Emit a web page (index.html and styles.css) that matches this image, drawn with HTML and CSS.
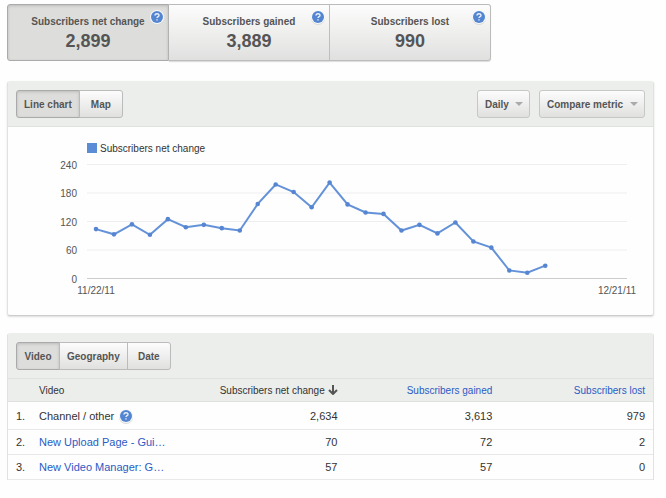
FILE: index.html
```
<!DOCTYPE html>
<html lang="en">
<head>
	<meta charset="UTF-8">
	<title>Subscribers</title>
	<link rel="stylesheet" href="styles.css">
</head>
<body>
	<svg class="defs" aria-hidden="true">
		<symbol id="help" viewBox="0 0 16 16">
			<circle cx="8" cy="9" r="7" fill="#d9dbd9"/>
			<circle cx="8" cy="8" r="7" fill="#f8f9fa"/>
			<circle cx="8" cy="8" r="6" fill="#5485d0"/>
			<path d="M6 6.5C6 4.2 10 4.2 10 6.4C10 7.7 8 7.6 8 9.1M8 10.2V11.4" fill="none" stroke="#e8effa" stroke-width="1.4"/>
		</symbol>
	</svg>

	<div class="stats">
		<button type="button" class="stat selected">
			<span class="stat-name">Subscribers net change</span>
			<span class="stat-value">2,899</span>
			<svg class="help"><use href="#help"/></svg>
		</button>
		<button type="button" class="stat">
			<span class="stat-name">Subscribers gained</span>
			<span class="stat-value">3,889</span>
			<svg class="help"><use href="#help"/></svg>
		</button>
		<button type="button" class="stat">
			<span class="stat-name">Subscribers lost</span>
			<span class="stat-value">990</span>
			<svg class="help"><use href="#help"/></svg>
		</button>
	</div>

	<div class="panel chart-panel">
		<div class="toolbar">
			<div class="tabs">
				<button type="button" class="selected">Line chart</button>
				<button type="button">Map</button>
			</div>
			<div class="filters">
				<label class="dropdown">
					<select aria-label="Interval"><option>Daily</option></select>
				</label>
				<label class="dropdown">
					<select aria-label="Compare metric"><option>Compare metric</option></select>
				</label>
			</div>
		</div>
		<svg class="chart" viewBox="0 0 645 188">
			<rect class="legend" x="79" y="16" width="10" height="10"/>
			<text class="legend-text" x="92" y="25">Subscribers net change</text>
			<g id="grid"></g>
			<polyline id="line" class="line"/>
			<g id="dots" class="dots"></g>
			<text x="88" y="167" text-anchor="middle">11/22/11</text>
			<text x="609" y="167" text-anchor="middle">12/21/11</text>
		</svg>
	</div>

	<div class="panel table-panel">
		<div class="toolbar">
			<div class="tabs">
				<button type="button" class="selected">Video</button>
				<button type="button">Geography</button>
				<button type="button">Date</button>
			</div>
		</div>
		<table>
			<thead>
				<tr>
					<th class="num"></th>
					<th class="name">Video</th>
					<th class="wide">Subscribers net change <svg class="sort" viewBox="0 0 10 10"><path d="M5 0V9M1 5L5 9L9 5"/></svg></th>
					<th class="wide"><a href="#">Subscribers gained</a></th>
					<th><a href="#">Subscribers lost</a></th>
				</tr>
			</thead>
			<tbody>
				<tr>
					<td class="num">1.</td>
					<td class="name"><span class="channel">Channel / other <svg class="help"><use href="#help"/></svg></span></td>
					<td>2,634</td>
					<td>3,613</td>
					<td>979</td>
				</tr>
				<tr>
					<td class="num">2.</td>
					<td class="name"><a href="#">New Upload Page - Gui…</a></td>
					<td>70</td>
					<td>72</td>
					<td>2</td>
				</tr>
				<tr>
					<td class="num">3.</td>
					<td class="name"><a href="#">New Video Manager: G…</a></td>
					<td>57</td>
					<td>57</td>
					<td>0</td>
				</tr>
			</tbody>
		</table>
	</div>

	<script src="chart.js"></script>
</body>
</html>
```
FILE: chart.js
```
var data = [104, 93, 114, 92, 125, 108, 113, 106, 101, 157, 198, 182, 150, 202, 156, 139, 136, 101, 113, 95, 118, 78, 65, 17, 12, 27];
var grid = '';
var dots = '';
var points = [];

function getY(value){
	return 151.5 - value * 114 / 240;
}

for(var v=0; v<=240; v+=60){
	grid += '<line class="' + (v ? 'rule' : 'base') + '" x1="79" x2="619" y1="' + getY(v) + '" y2="' + getY(v) + '"/>';
	grid += '<text x="69" y="' + (getY(v) + 4) + '" text-anchor="end">' + v + '</text>';
}

// 30 days, one every 18 units
for(var i=0; i<data.length; i++){
	var x = 88 + i * 17.97;
	points.push(x + ',' + getY(data[i]));
	dots += '<circle cx="' + x + '" cy="' + getY(data[i]) + '" r="2.3"/>';
}

document.getElementById('grid').innerHTML = grid;
document.getElementById('dots').innerHTML = dots;
document.getElementById('line').setAttribute('points', points.join(' '));
```
FILE: styles.css
```
*{
	box-sizing: border-box;
}
body{
	margin: 0;
	padding: 4px 12px 16px 7px;
	background: #fefefe;
	color: #333;
	font-family: "Liberation Sans", Arial, sans-serif;
	font-size: 11px;
}
button, select{
	font: bold 10px "Liberation Sans", Arial, sans-serif;
	color: #555;
	border: 1px solid #bbb;
	background: linear-gradient(#fcfcfc, #e0e1df);
	cursor: pointer;
}
a{
	color: #2a5bc4;
	text-decoration: none;
}
.defs{
	display: none;
}
.help{
	width: 16px;
	height: 16px;
}

/* totals */
.stats{
	display: flex;
	width: 75%;
	max-width: 484px;
}
.stat{
	flex: 1;
	position: relative;
	display: flex;
	flex-direction: column;
	align-items: center;
	padding: 11px 0 6px;
	border-left-width: 0;
	box-shadow: 0 1px 1px #ddd;
}
.stat:first-child{
	border-left-width: 1px;
	border-radius: 3px 0 0 3px;
}
.stat:last-child{
	border-radius: 0 3px 3px 0;
}
.stat-name{
	line-height: 12px;
}
.stat-value{
	font-size: 18px;
	line-height: 26px;
}
.stat .help{
	position: absolute;
	top: 4px;
	right: 3px;
}
.stat.selected, .tabs .selected{
	background: #dddedb;
	border-color: #aaa;
	box-shadow: inset 0 1px 3px #bbb;
}

/* panels */
.panel{
	border: 1px solid #e0e2e0;
	border-top-color: #eceeec;
	border-radius: 3px 3px 0 0;
}
.chart-panel{
	margin-top: 20px;
	border-bottom-color: #ccc;
	border-radius: 3px;
	box-shadow: 0 1px 2px #ddd;
}
.table-panel{
	margin-top: 17px;
	border-bottom: 0;
}
.toolbar{
	display: flex;
	justify-content: space-between;
	padding: 8px;
	background: #eceeec;
	border-bottom: 1px solid #dfe1df;
}
.tabs{
	display: flex;
}
.tabs button{
	height: 28px;
	min-width: 44px;
	padding: 0 7px;
	margin-left: -1px;
}
.tabs button:first-child{
	margin-left: 0;
	border-radius: 3px 0 0 3px;
}
.tabs button:last-child{
	border-radius: 0 3px 3px 0;
}
.filters{
	display: flex;
	gap: 9px;
}
.dropdown{
	position: relative;
}
.dropdown select{
	height: 28px;
	padding: 0 20px 0 7px;
	border-color: #c6c8c6;
	border-radius: 3px;
	appearance: none;
}
.dropdown::after{
	content: "";
	position: absolute;
	top: 12px;
	right: 7px;
	border: 4px solid transparent;
	border-top-color: #aaa;
	border-bottom: 0;
	pointer-events: none;
}

/* chart */
.chart{
	display: block;
	width: 100%;
	font-size: 10px;
	fill: #555;
}
.legend{
	fill: #5b8cd6;
}
.legend-text{
	fill: #333;
}
.rule{
	stroke: #eee;
}
.base{
	stroke: #ccc;
}
.line{
	fill: none;
	stroke: #6492d8;
	stroke-width: 2;
}
.dots{
	fill: #5686d2;
}

/* table */
table{
	width: 100%;
	table-layout: fixed;
	border-collapse: separate;
	border-spacing: 0;
}
th, td{
	height: 25px;
	padding: 0 8px 0 0;
	text-align: right;
	white-space: nowrap;
	border-bottom: 1px solid #e6e9e8;
}
th{
	height: 23px;
	font-size: 10px;
	font-weight: normal;
	background: #eceeec;
	border-color: #dfe1df;
}
.num{
	width: 30px;
	padding-left: 8px;
	text-align: left;
}
.name{
	padding-left: 1px;
	text-align: left;
}
.wide{
	width: 24%;
}
tbody tr:first-child td{
	height: 28px;
}
.channel{
	display: flex;
	align-items: center;
	gap: 4px;
}
.sort{
	width: 10px;
	height: 10px;
	vertical-align: -1px;
	fill: none;
	stroke: #555;
	stroke-width: 2;
}
```
